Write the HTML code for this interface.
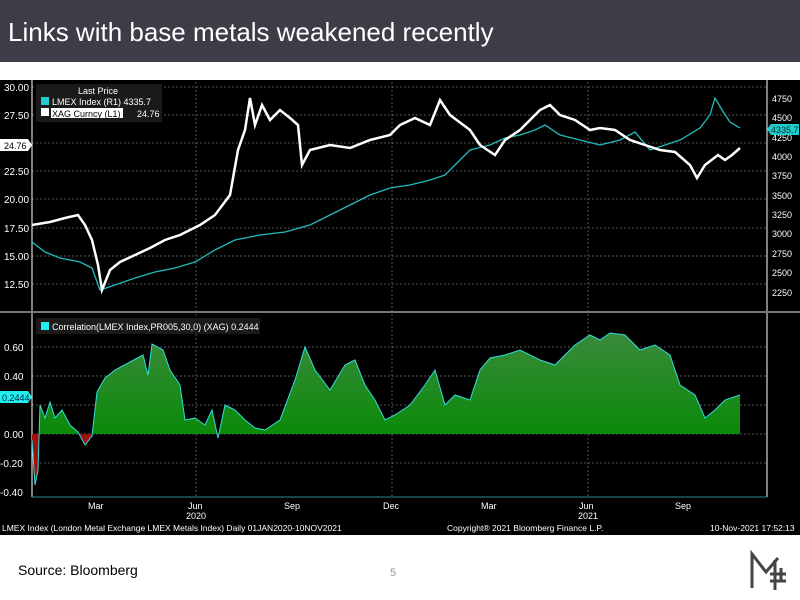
<!DOCTYPE html>
<html><head><meta charset="utf-8"><style>
body{margin:0;width:800px;height:600px;background:#fff;position:relative;overflow:hidden;font-family:"Liberation Sans",sans-serif}
.hd{position:absolute;left:0;top:0;width:800px;height:62px;background:#3d3d47;color:#fff;font-size:26px;line-height:64px;padding-left:8px;box-sizing:border-box}
svg text{font-family:"Liberation Sans",sans-serif}
</style></head><body>
<div class="hd">Links with base metals weakened recently</div>
<svg style="position:absolute;left:0;top:80px" width="800" height="455" viewBox="0 80 800 455">
<defs><linearGradient id="g" x1="0" y1="330" x2="0" y2="434" gradientUnits="userSpaceOnUse"><stop offset="0" stop-color="#3c8a3c"/><stop offset="1" stop-color="#0a8a0a"/></linearGradient>
<clipPath id="up"><rect x="0" y="300" width="800" height="134"/></clipPath>
<clipPath id="dn"><rect x="0" y="434" width="800" height="80"/></clipPath></defs>
<rect x="0" y="80" width="800" height="455" fill="#000"/>
<g stroke="#555" stroke-dasharray="2,2" stroke-width="1">
<line x1="32" y1="87" x2="767" y2="87"/><line x1="32" y1="115" x2="767" y2="115"/><line x1="32" y1="143" x2="767" y2="143"/><line x1="32" y1="171" x2="767" y2="171"/><line x1="32" y1="199" x2="767" y2="199"/><line x1="32" y1="228" x2="767" y2="228"/><line x1="32" y1="256" x2="767" y2="256"/><line x1="32" y1="284" x2="767" y2="284"/>
<line x1="32" y1="347" x2="767" y2="347"/><line x1="32" y1="376" x2="767" y2="376"/><line x1="32" y1="405" x2="767" y2="405"/><line x1="32" y1="434" x2="767" y2="434"/><line x1="32" y1="463" x2="767" y2="463"/>
<line x1="196" y1="82" x2="196" y2="497"/><line x1="392" y1="82" x2="392" y2="497"/><line x1="588" y1="82" x2="588" y2="497"/>
</g>
<line x1="32" y1="80" x2="32" y2="497" stroke="#fff"/>
<line x1="767" y1="80" x2="767" y2="497" stroke="#fff"/>
<line x1="0" y1="312" x2="800" y2="312" stroke="#777" stroke-width="2"/>
<line x1="32" y1="497" x2="767" y2="497" stroke="#2a8a8a"/>
<g fill="#fff" font-size="10">
<text x="4" y="91">30.00</text><text x="4" y="119">27.50</text><text x="4" y="175">22.50</text><text x="4" y="203">20.00</text><text x="4" y="232">17.50</text><text x="4" y="260">15.00</text><text x="4" y="288">12.50</text>
<text x="4" y="351">0.60</text><text x="4" y="380">0.40</text><text x="4" y="438">0.00</text><text x="0" y="467">-0.20</text><text x="0" y="496">-0.40</text>
<g font-size="9"><text x="772" y="102">4750</text><text x="772" y="121">4500</text><text x="772" y="141">4250</text><text x="772" y="160">4000</text><text x="772" y="179">3750</text><text x="772" y="199">3500</text><text x="772" y="218">3250</text><text x="772" y="237">3000</text><text x="772" y="257">2750</text><text x="772" y="276">2500</text><text x="772" y="296">2250</text></g>
<text x="88" y="509" font-size="9">Mar</text><text x="188" y="509" font-size="9">Jun</text><text x="284" y="509" font-size="9">Sep</text><text x="383" y="509" font-size="9">Dec</text><text x="481" y="509" font-size="9">Mar</text><text x="579" y="509" font-size="9">Jun</text><text x="675" y="509" font-size="9">Sep</text>
<text x="186" y="519" font-size="9">2020</text><text x="578" y="519" font-size="9">2021</text>
<text x="2" y="531" font-size="8.5">LMEX Index (London Metal Exchange LMEX Metals Index)  Daily 01JAN2020-10NOV2021</text>
<text x="447" y="531" font-size="8.5">Copyright® 2021 Bloomberg Finance L.P.</text>
<text x="710" y="531" font-size="8.5">10-Nov-2021 17:52:13</text>
</g>
<path d="M0 139h28l4 6-4 6H0z" fill="#fff"/><text x="4" y="149" font-size="9" fill="#000">24.76</text>
<path d="M0 391h28l4 6-4 6H0z" fill="#2ee"/><text x="2" y="401" font-size="9" fill="#024">0.2444</text>
<path d="M767 129l4-5h28v11h-28z" fill="#2cc"/><text x="771" y="133" font-size="9" fill="#033">4335.7</text>
<rect x="36" y="84" width="126" height="38" fill="#1a1a1a"/>
<text x="78" y="94" fill="#fff" font-size="9">Last Price</text>
<rect x="41" y="97" width="8" height="8" fill="#2cc"/><text x="52" y="105" fill="#fff" font-size="9">LMEX Index  (R1) 4335.7</text>
<rect x="41" y="108" width="8" height="8" fill="#fff"/><rect x="51" y="108" width="72" height="10" fill="#fff"/><text x="52" y="117" fill="#000" font-size="9">XAG Curncy  (L1)</text><text x="137" y="117" fill="#fff" font-size="9">24.76</text>
<rect x="36" y="318" width="224" height="16" fill="#1a1a1a"/>
<rect x="41" y="322" width="8" height="8" fill="#2ee"/><text x="52" y="330" fill="#fff" font-size="9">Correlation(LMEX Index,PR005,30,0) (XAG) 0.2444</text>
<polyline fill="none" stroke="#2bb" stroke-width="1.3" points="32,242 45,252 60,258 80,262 92,268 100,290 115,285 135,278 155,272 175,268 195,262 215,250 235,240 260,235 285,232 310,225 330,215 350,205 370,195 390,188 410,185 430,180 445,175 455,165 470,150 490,145 505,138 520,135 535,130 545,125 560,135 580,140 600,145 620,140 635,132 650,150 665,145 680,140 700,128 710,115 715,98 722,110 730,122 740,128"/>
<polyline fill="none" stroke="#fff" stroke-width="2.5" points="32,225 50,222 65,218 78,215 85,225 92,240 98,265 102,290 110,270 120,262 135,255 150,248 165,240 180,235 200,225 215,215 230,195 238,150 245,130 250,98 255,125 262,105 270,120 280,110 290,118 298,125 302,165 310,150 330,145 350,148 370,140 390,135 400,125 415,118 430,125 440,100 450,115 470,130 480,145 495,155 505,140 520,130 540,110 550,105 560,115 575,120 590,130 600,128 615,130 630,140 645,145 660,150 675,152 690,165 697,178 705,165 718,155 725,160 732,155 740,148"/>
<g id="c">
<polygon clip-path="url(#up)" fill="url(#g)" points="32,434 32,440 35,485 38,470 40,405 45,418 50,402 55,418 62,410 70,425 78,432 85,445 92,436 97,392 105,378 115,370 130,362 143,355 148,375 152,344 163,350 170,370 180,385 185,420 195,418 205,425 212,410 218,438 225,405 235,410 245,420 255,428 265,430 280,420 295,380 305,347 315,370 330,390 345,365 355,360 365,385 375,400 385,420 395,415 410,405 425,385 435,370 445,405 455,395 470,400 480,370 490,358 505,355 520,350 540,360 555,365 575,345 590,335 600,340 610,333 625,335 640,350 655,345 670,355 680,385 695,395 705,418 715,410 725,400 740,395 740,434"/>
<polygon clip-path="url(#dn)" fill="#a01010" points="32,434 32,440 35,485 38,470 40,405 45,418 50,402 55,418 62,410 70,425 78,432 85,445 92,436 97,392 100,434"/>
<polyline fill="none" stroke="#3dd" stroke-width="1" points="32,440 35,485 38,470 40,405 45,418 50,402 55,418 62,410 70,425 78,432 85,445 92,436 97,392 105,378 115,370 130,362 143,355 148,375 152,344 163,350 170,370 180,385 185,420 195,418 205,425 212,410 218,438 225,405 235,410 245,420 255,428 265,430 280,420 295,380 305,347 315,370 330,390 345,365 355,360 365,385 375,400 385,420 395,415 410,405 425,385 435,370 445,405 455,395 470,400 480,370 490,358 505,355 520,350 540,360 555,365 575,345 590,335 600,340 610,333 625,335 640,350 655,345 670,355 680,385 695,395 705,418 715,410 725,400 740,395"/>
</g>
</svg>
<div style="position:absolute;left:18px;top:562px;font-size:14px;color:#000">Source: Bloomberg</div>
<div style="position:absolute;left:390px;top:567px;font-size:11px;color:#999">5</div>
<svg style="position:absolute;left:748px;top:550px" width="40" height="42" viewBox="0 0 40 42"><g fill="none" stroke="#444" stroke-width="3"><path d="M4 38V4l14 18 12-14"/><path d="M27 10v30M33 18v14M22 24h16M22 31h16"/></g></svg>
</body></html>
